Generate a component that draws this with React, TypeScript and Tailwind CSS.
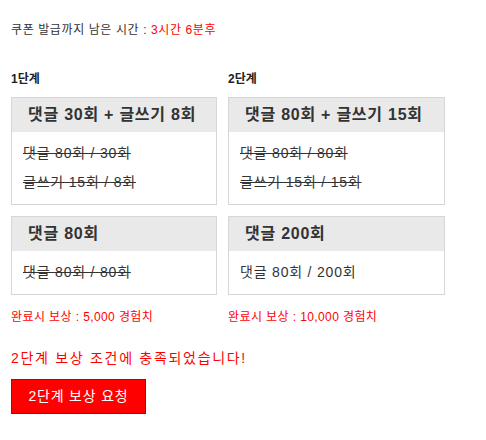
import React from 'react';

const font = { fontFamily: '"Liberation Sans", "Noto Sans CJK KR", sans-serif' };

type Row = { text: string; done: boolean };

function StageBox({ title, rows }: { title: string; rows: Row[] }) {
  return (
    <div className="border border-[#d6d6d6] bg-white">
      <div className="h-[34px] bg-[#e9e9e9] pl-[16px] flex items-center text-[16px] font-bold tracking-[0.75px] text-[#333]">
        {title}
      </div>
      <div className="px-[11px] py-[7px] flex flex-col">
        {rows.map((r, i) => (
          <div
            key={i}
            className={`h-[29px] flex items-center text-[14px] tracking-[0.8px] text-[#333] ${r.done ? 'line-through' : ''}`}
          >
            {r.text}
          </div>
        ))}
      </div>
    </div>
  );
}

export default function App() {
  return (
    <div className="w-[486px] h-[440px] bg-white pl-[11px] pt-[21px] text-[#333]" style={font}>
      <p className="text-[12px] leading-[18px] tracking-[0.6px]">
        쿠폰 발급까지 남은 시간 : <span className="text-[#ff0000]">3시간 6분후</span>
      </p>

      <div className="mt-[31px] grid grid-cols-[206px_217px] gap-x-[11px]">
        <div className="text-[12px] leading-[18px] font-bold text-[#222]">1단계</div>
        <div className="text-[12px] leading-[18px] font-bold text-[#222]">2단계</div>

        <div className="mt-[9px]">
          <StageBox
            title="댓글 30회 + 글쓰기 8회"
            rows={[
              { text: '댓글 80회 / 30회', done: true },
              { text: '글쓰기 15회 / 8회', done: true },
            ]}
          />
        </div>
        <div className="mt-[9px]">
          <StageBox
            title="댓글 80회 + 글쓰기 15회"
            rows={[
              { text: '댓글 80회 / 80회', done: true },
              { text: '글쓰기 15회 / 15회', done: true },
            ]}
          />
        </div>

        <div className="mt-[11px]">
          <StageBox title="댓글 80회" rows={[{ text: '댓글 80회 / 80회', done: true }]} />
        </div>
        <div className="mt-[11px]">
          <StageBox title="댓글 200회" rows={[{ text: '댓글 80회 / 200회', done: false }]} />
        </div>

        <div className="mt-[13px] text-[12px] leading-[18px] tracking-[0.4px] text-[#ff0000]">완료시 보상 : 5,000 경험치</div>
        <div className="mt-[13px] text-[12px] leading-[18px] tracking-[0.4px] text-[#ff0000]">완료시 보상 : 10,000 경험치</div>
      </div>

      <p className="mt-[22px] text-[14px] leading-[20px] tracking-[1.7px] text-[#ff0000]">2단계 보상 조건에 충족되었습니다!</p>

      <button className="mt-[11px] w-[135px] h-[35px] bg-[#ff0000] border border-[#c00000] text-white text-[14px] tracking-[0.8px]">
        2단계 보상 요청
      </button>
    </div>
  );
}
